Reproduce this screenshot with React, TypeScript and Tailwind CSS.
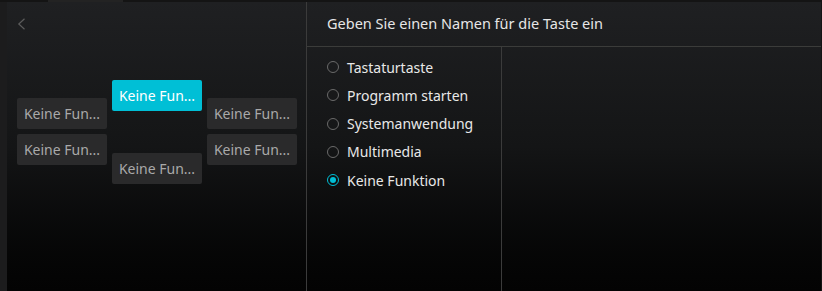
import React, { useState } from 'react';

const OPTIONS = ['Tastaturtaste', 'Programm starten', 'Systemanwendung', 'Multimedia', 'Keine Funktion'];

const KeyButton: React.FC<{ active?: boolean }> = ({ active }) => (
  <div
    className={`w-[90px] h-[31px] rounded-[2px] flex items-center justify-center text-[14px] ${
      active ? 'bg-[#00bfd6] text-white' : 'bg-[#2a2a2b] text-[#a9a9a9]'
    }`}
  >
    Keine Fun...
  </div>
);

const App: React.FC = () => {
  const [selected, setSelected] = useState(4);

  return (
    <div
      className="w-[822px] h-[291px] bg-[#141414] flex flex-col overflow-hidden"
      style={{ fontFamily: '"Noto Sans", "Open Sans", sans-serif' }}
    >
      {/* top strip */}
      <div className="h-[2px] flex-none flex">
        <div className="w-[48px]" />
        <div className="w-[75px] bg-[#232323]" />
      </div>

      <div className="flex-1 flex">
        <div className="w-[7px] bg-[#1c1c1d]" />

        <div className="w-[814px] flex bg-gradient-to-b from-[#1f2022] via-[#141516] to-[#030303]">
          {/* left: key layout */}
          <div className="w-[299px] flex flex-col pl-[10px] pt-[16px]">
            <svg width="9" height="12" viewBox="0 0 9 12" className="text-[#5c5c5c]">
              <path d="M7.5 0.8 L1.8 6 L7.5 11.2" fill="none" stroke="currentColor" strokeWidth="1.2" />
            </svg>
            <div className="flex gap-[5px] mt-[50px]">
              <div className="flex flex-col gap-[5px] mt-[18px]">
                <KeyButton />
                <KeyButton />
              </div>
              <div className="flex flex-col gap-[42px]">
                <KeyButton active />
                <KeyButton />
              </div>
              <div className="flex flex-col gap-[5px] mt-[18px]">
                <KeyButton />
                <KeyButton />
              </div>
            </div>
          </div>

          {/* right: settings */}
          <div className="flex-1 flex flex-col border-l border-[#3b3b3b]">
            <div className="h-[45px] flex items-center pl-[20px] border-b border-[#3b3c3a] text-[14.5px] text-[#e6e6e6]">
              Geben Sie einen Namen für die Taste ein
            </div>
            <div className="flex-1 flex">
              <div className="w-[195px] border-r border-[#3b3b3b] pl-[20px] pt-[6px] flex flex-col">
                {OPTIONS.map((opt, i) => (
                  <button
                    key={opt}
                    onClick={() => setSelected(i)}
                    className="h-[28.25px] flex items-center gap-[8px] text-[14px] text-[#e8e8e8] text-left"
                  >
                    <span
                      className={`w-[12px] h-[12px] rounded-full border flex items-center justify-center ${
                        selected === i ? 'border-[#00bfd6]' : 'border-[#6a6a6a]'
                      }`}
                    >
                      {selected === i && <span className="w-[6px] h-[6px] rounded-full bg-[#00bfd6]" />}
                    </span>
                    {opt}
                  </button>
                ))}
              </div>
              <div className="flex-1" />
            </div>
          </div>
        </div>
      </div>
    </div>
  );
};

export default App;
